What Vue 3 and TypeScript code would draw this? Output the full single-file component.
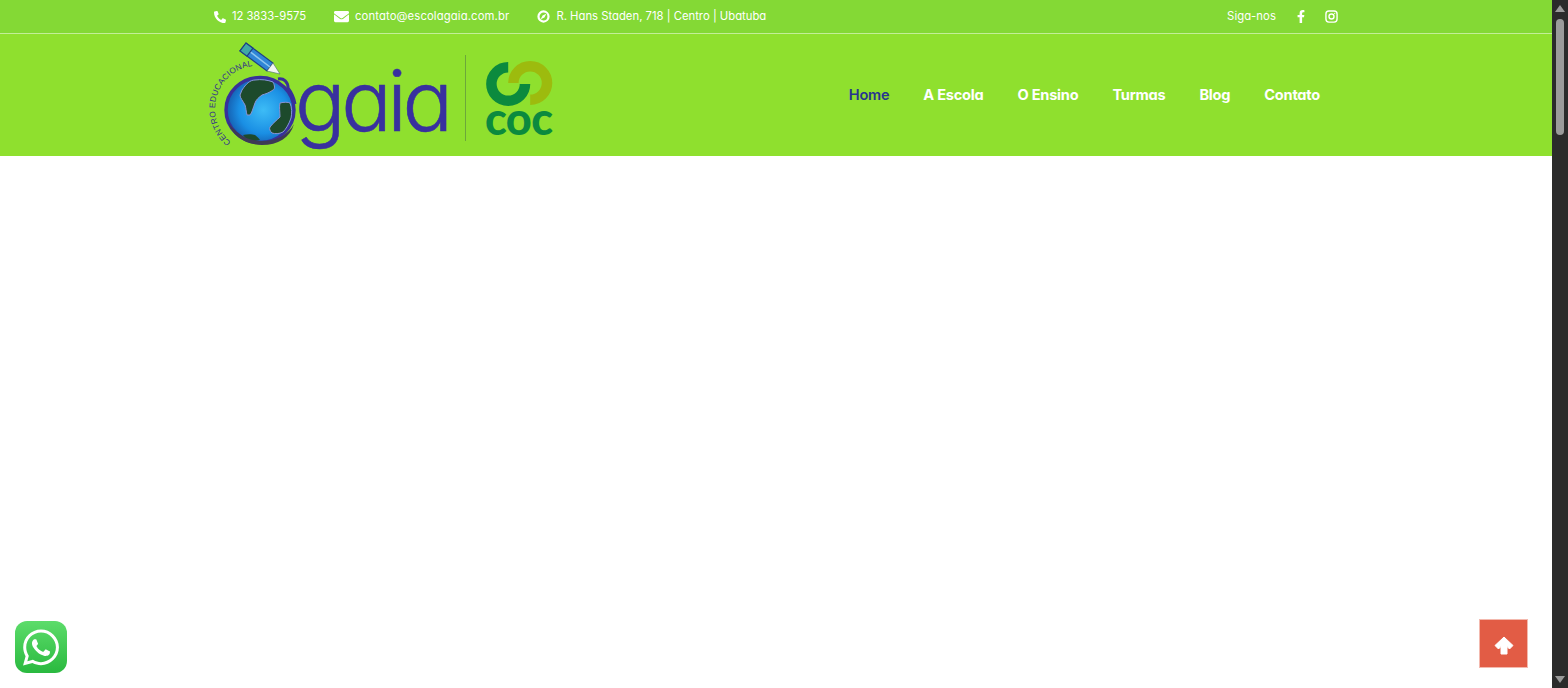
<script setup lang="ts">
const navItems = ['Home', 'A Escola', 'O Ensino', 'Turmas', 'Blog', 'Contato']
</script>

<template>
  <div class="page">
    <main class="content">
      <div class="topbar">
        <div class="container topbar-row">
          <div class="contact-list">
            <span class="contact contact-phone">
              <svg class="ico-phone" viewBox="0 0 512 512"><path transform="matrix(-1 0 0 1 512 0)" d="M493.4 24.6l-104-24c-11.3-2.6-22.9 3.3-27.5 13.9l-48 112c-4.2 9.8-1.4 21.3 6.9 28l60.6 49.6c-36 76.7-98.9 140.5-177.2 177.2l-49.6-60.6c-6.8-8.3-18.2-11.1-28-6.9l-112 48C3.9 366.5-2 378.1.6 389.4l24 104C27.1 504.2 36.7 512 48 512c256.1 0 464-207.5 464-464 0-11.2-7.7-20.9-18.6-23.4z" /></svg>
              <span class="label">12 3833-9575</span>
            </span>
            <span class="contact">
              <svg class="ico-mail" viewBox="0 0 512 512"><path d="M502.3 190.8c3.9-3.1 9.7-.2 9.7 4.7V400c0 26.5-21.5 48-48 48H48c-26.5 0-48-21.5-48-48V195.6c0-5 5.7-7.8 9.7-4.7 22.4 17.4 52.1 39.5 154.1 113.6 21.1 15.4 56.7 47.8 92.2 47.6 35.7.3 72-32.8 92.3-47.6 102-74.1 131.6-96.3 154-113.7zM256 320c23.2.4 56.6-29.2 73.4-41.4 132.7-96.3 142.8-104.7 173.4-128.7 5.8-4.5 9.2-11.5 9.2-18.9v-19c0-26.5-21.5-48-48-48H48C21.5 64 0 85.5 0 112v19c0 7.4 3.4 14.3 9.2 18.9 30.6 23.9 40.7 32.4 173.4 128.7 16.8 12.2 50.2 41.8 73.4 41.4z" /></svg>
              <span class="label">contato@escolagaia.com.br</span>
            </span>
            <span class="contact contact-address">
              <svg class="ico-compass" viewBox="0 0 14 14">
                <circle cx="7" cy="7" r="5.4" fill="none" stroke="#fff" stroke-width="2.4" />
                <path d="M10 4 L8 8 L4 10 L6 6 Z" fill="#fff" />
              </svg>
              <span class="label">R. Hans Staden, 718 | Centro | Ubatuba</span>
            </span>
          </div>
          <div class="social">
            <span class="social-label label">Siga-nos</span>
            <svg class="ico-fb" viewBox="0 0 320 512"><path d="M279.14 288l14.22-92.66h-88.91v-60.13c0-25.35 12.42-50.06 52.24-50.06h40.42V6.26S260.43 0 225.36 0c-73.22 0-121.08 44.38-121.08 124.72v70.62H22.89V288h81.39v224h100.17V288z" /></svg>
            <svg class="ico-ig" viewBox="0 0 14 14" stroke="#fff">
              <rect x="1" y="1" width="12" height="12" rx="3.2" stroke-width="1.5" />
              <circle cx="7" cy="7" r="2.7" stroke-width="1.5" />
              <circle cx="10.4" cy="3.6" r="0.7" fill="#fff" stroke="none" />
            </svg>
          </div>
        </div>
      </div>

      <header class="mainbar">
        <div class="container mainbar-row">
          <!-- viewBox follows page pixels so the logo parts are easy to compare -->
          <svg class="logo" viewBox="214 38 345 116">
            <defs>
              <radialGradient id="sea" cx="0.55" cy="0.5" r="0.6">
                <stop offset="0" stop-color="#3dbcf6" />
                <stop offset="0.6" stop-color="#1a8fe4" />
                <stop offset="1" stop-color="#1450a0" />
              </radialGradient>
              <path id="arc" d="M231 142 A43 43 0 0 1 252 66" />
            </defs>
            <text class="logo-small" font-size="8.2" fill="#2f2c8f" textLength="100"><textPath href="#arc">CENTRO EDUCACIONAL</textPath></text>
            <!-- pencil -->
            <path d="M246 43 L240 51 L267 71 L273 63 Z" fill="#2f86d6" stroke="#1f3f86" stroke-width="1.2" />
            <path d="M244 47 L270 67" stroke="#8fc6ee" stroke-width="1.5" />
            <path d="M246 43 L240 51 L247 56.2 L253 48.2 Z" fill="#3fa9a6" stroke="#1f3f86" stroke-width="1.2" />
            <path d="M267 71 L273 63 L280 74 Z" fill="#f2f6f4" stroke="#4a6a70" stroke-width="0.6" />
            <!-- globe -->
            <ellipse cx="260" cy="110" rx="34" ry="32.5" fill="url(#sea)" stroke="#38309a" stroke-width="3.4" />
            <path d="M278 79 C284 78 288 82 288 88 C291 92 294 98 295 104" fill="none" stroke="#38309a" stroke-width="3" />
            <path d="M242 90 C246 84 250 80 255 80 C261 79 268 80 273 82 C275 86 275 89 273 90 C269 93 265 94 262 95 C258 98 256 100 255 103 C253 108 252 113 250 115 L247 115 C246 111 246 108 245 105 C243 101 240 98 240 95 Z" fill="#1d4a2c" stroke="#8a94d6" stroke-width="1" />
            <path d="M280 103 C284 102 288 102 290 103 C292 108 292 113 291 118 C289 124 286 129 283 132 C279 134 275 134 272 133 C270 131 269 129 270 127 C273 123 277 120 280 117 C280 112 279 107 280 103 Z" fill="#1d4a2c" stroke="#8a94d6" stroke-width="1" />
            <path d="M243 135 C247 134 252 134 255 135 C257 137 259 138 260 140 C256 141 252 141 248 141 Z" fill="#1d4a2c" />
            <path d="M228 122 C232 136 246 145 262 145 C278 145 290 138 294 124 C288 135 276 141 262 141 C248 141 236 134 228 122 Z" fill="#3d3a55" />
            <!-- wordmark -->
            <text class="logo-word" x="295" y="131" font-size="84" textLength="158">gaia</text>
            <!-- divider -->
            <line x1="465.5" y1="55" x2="465.5" y2="141" stroke="#6ca83a" stroke-width="1" />
            <!-- coc mark -->
            <path d="M513.4 83 A16.8 16.8 0 1 1 530.2 99.8" fill="none" stroke="#9dbb0e" stroke-width="10.5" />
            <path d="M508.2 67.2 A16.8 16.8 0 1 0 525 84" fill="none" stroke="#0b8a3e" stroke-width="10.5" />
            <text class="logo-coc" x="485" y="135" font-size="45" textLength="68">coc</text>
          </svg>

          <nav class="nav">
            <a v-for="(item, idx) in navItems" :key="item" class="nav-link" :class="{ active: idx === 0 }">{{ item }}</a>
          </nav>
        </div>
      </header>
    </main>

    <div class="scrollbar">
      <span class="arrow up" />
      <span class="track"><span class="thumb" /></span>
      <span class="arrow down" />
    </div>

    <a class="whatsapp">
      <svg viewBox="0 0 448 512"><path fill="#fff" d="M380.9 97.1C339 55.1 283.2 32 223.9 32c-122.4 0-222 99.6-222 222 0 39.1 10.2 77.3 29.6 111L0 480l117.7-30.9c32.4 17.7 68.9 27 106.1 27h.1c122.3 0 224.1-99.6 224.1-222 0-59.3-25.2-115-67.1-157zm-157 341.6c-33.2 0-65.7-8.9-94-25.7l-6.7-4-69.8 18.3L72 359.2l-4.4-7c-18.5-29.4-28.2-63.3-28.2-98.2 0-101.7 82.8-184.5 184.6-184.5 49.3 0 95.6 19.2 130.4 54.1 34.8 34.9 56.2 81.2 56.1 130.5 0 101.8-84.9 184.6-186.6 184.6zm101.2-138.2c-5.5-2.8-32.8-16.2-37.9-18-5.1-1.9-8.8-2.8-12.5 2.8-3.7 5.6-14.3 18-17.6 21.8-3.2 3.7-6.5 4.2-12 1.4-32.6-16.3-54-29.1-75.5-66-5.7-9.8 5.7-9.1 16.3-30.3 1.8-3.7.9-6.9-.5-9.7-1.4-2.8-12.5-30.1-17.1-41.2-4.5-10.8-9.1-9.3-12.5-9.5-3.2-.2-6.9-.2-10.6-.2-3.7 0-9.7 1.4-14.8 6.9-5.1 5.6-19.4 19-19.4 46.3 0 27.3 19.9 53.7 22.6 57.4 2.8 3.7 39.1 59.7 94.8 83.8 35.2 15.2 49 16.5 66.6 13.9 10.7-1.6 32.8-13.4 37.4-26.4 4.6-13 4.6-24.1 3.2-26.4-1.3-2.5-5-3.9-10.5-6.6z" /></svg>
    </a>

    <a class="to-top">
      <svg viewBox="0 0 20 19"><path fill="#fff" stroke="#fff" stroke-width="1" stroke-linejoin="round" d="M10 1 L19 9.5 L15.5 13 L13 10.5 V18 H7 V10.5 L4.5 13 L1 9.5 Z" /></svg>
    </a>
  </div>
</template>

<style>
html,
body {
  margin: 0;
  overflow: hidden;
  background: #fff;
}
</style>

<style scoped>
.page {
  display: flex;
  height: 100vh;
  overflow: hidden;
  font-family: Inter, "Liberation Sans", sans-serif;
  font-feature-settings: "cv11";
}

.content {
  flex: 1;
  min-width: 0;
  background: #fff;
}

.container {
  width: 1124px;
  margin: 0 auto;
  display: flex;
  align-items: center;
  justify-content: space-between;
}

.topbar {
  background: #84d935;
  border-bottom: 1px solid #c3ee98;
  height: 33px;
  color: #fff;
  font-size: 11.3px;
  letter-spacing: 0.12px;
}

.topbar-row {
  height: 100%;
}

.contact-list {
  display: flex;
  gap: 28px;
}

.contact {
  display: flex;
  align-items: center;
  gap: 6px;
  white-space: nowrap;
}

.contact-phone {
  letter-spacing: -0.07px;
}

.contact-address {
  letter-spacing: 0;
}

.label {
  margin-bottom: 2px;
}

.contact svg,
.social svg {
  fill: #fff;
  display: block;
  flex: none;
}

.ico-phone {
  width: 12px;
  height: 12px;
}

.ico-mail {
  width: 15px;
  height: 15px;
}

.ico-compass {
  width: 13px;
  height: 13px;
}

.social {
  display: flex;
  align-items: center;
}

.social-label {
  margin-right: 21px;
}

.ico-fb {
  width: 8px;
  height: 13px;
  margin-right: 20px;
}

.social .ico-ig {
  width: 13px;
  height: 13px;
  fill: none;
}

.mainbar {
  background: #8fe02e;
  height: 122px;
}

.mainbar-row {
  height: 100%;
}

.logo {
  width: 345px;
  height: 116px;
  display: block;
  margin-top: 4px;
  align-self: flex-start;
  overflow: visible;
}

.logo-small {
  font-family: "Liberation Sans", sans-serif;
}

.logo-word {
  font-family: Inter, sans-serif;
  font-feature-settings: "cv11";
  font-weight: 300;
  fill: #38309f;
  stroke: #38309f;
  stroke-width: 0.6px;
  stroke-linejoin: round;
}

.logo-coc {
  font-family: Lato, sans-serif;
  font-weight: 900;
  fill: #0b8a3e;
}

.nav {
  display: flex;
  gap: 34px;
  margin-right: 18px;
}

.nav-link {
  color: #fff;
  font-size: 14.6px;
  font-weight: 700;
  letter-spacing: -0.24px;
  white-space: nowrap;
  cursor: pointer;
}

.nav-link.active {
  color: #27368f;
  font-weight: 600;
}

.scrollbar {
  flex: none;
  width: 16px;
  background: #2b2b2b;
  display: flex;
  flex-direction: column;
  align-items: center;
  padding-top: 5px;
  padding-bottom: 5px;
  box-sizing: border-box;
}

.arrow {
  width: 0;
  height: 0;
  border-left: 5px solid transparent;
  border-right: 5px solid transparent;
  flex: none;
}

.arrow.up {
  border-bottom: 7px solid #9a9a9a;
}

.arrow.down {
  border-top: 7px solid #9a9a9a;
}

.track {
  flex: 1;
  padding-top: 7px;
}

.thumb {
  display: block;
  width: 8px;
  height: 116px;
  background: #9b9b9b;
  border-radius: 4px;
}

.whatsapp {
  position: fixed;
  left: 15px;
  top: 621px;
  width: 52px;
  height: 52px;
  border-radius: 12px;
  background: linear-gradient(180deg, #5cdc6a, #2ab93f);
  display: flex;
  align-items: center;
  justify-content: center;
}

.whatsapp svg {
  width: 36px;
  height: 41px;
  display: block;
}

.to-top {
  position: fixed;
  left: 1479px;
  top: 619px;
  width: 49px;
  height: 49px;
  box-sizing: border-box;
  background: #e25c45;
  border: 1px solid #f3b9ae;
  display: flex;
  align-items: center;
  justify-content: center;
}

.to-top svg {
  width: 20px;
  height: 19px;
  display: block;
  margin-top: 3px;
}
</style>
